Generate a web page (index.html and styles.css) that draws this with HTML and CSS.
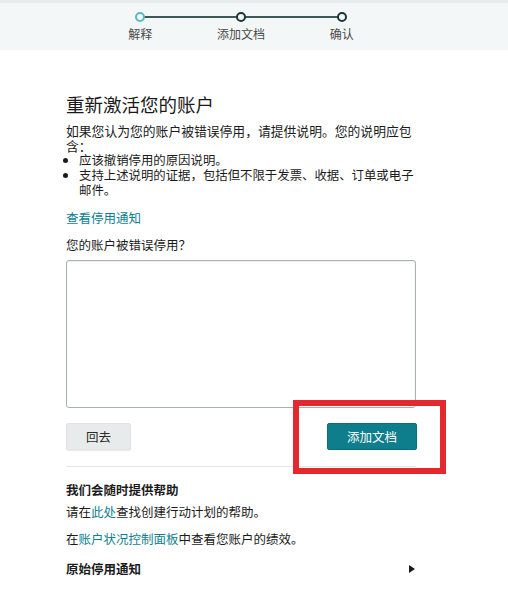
FILE: index.html
```html
<!DOCTYPE html>
<html lang="zh-CN">
<head>
<meta charset="utf-8">
<title>重新激活您的账户</title>
<link rel="stylesheet" href="styles.css">
</head>
<body>
<header class="topbar">
  <div class="stepper">
    <div class="step step-active"><span class="dot"></span><span class="step-label">解释</span></div>
    <div class="step"><span class="dot"></span><span class="step-label">添加文档</span></div>
    <div class="step"><span class="dot"></span><span class="step-label">确认</span></div>
  </div>
</header>
<main class="content">
  <h1 class="title">重新激活您的账户</h1>
  <p class="intro">如果您认为您的账户被错误停用，请提供说明。您的说明应包含：</p>
  <ul class="bullets">
    <li>应该撤销停用的原因说明。</li>
    <li>支持上述说明的证据，包括但不限于发票、收据、订单或电子邮件。</li>
  </ul>
  <a class="link notice-link" href="#">查看停用通知</a>
  <label class="field-label" for="why">您的账户被错误停用？</label>
  <textarea id="why" class="textarea"></textarea>
  <div class="actions">
    <button class="btn btn-secondary">回去</button>
    <button class="btn btn-primary">添加文档</button>
    <span class="highlight"></span>
  </div>
  <hr class="divider">
  <h2 class="help-title">我们会随时提供帮助</h2>
  <p class="help-line">请在<a class="link" href="#">此处</a>查找创建行动计划的帮助。</p>
  <p class="help-line second">在<a class="link" href="#">账户状况控制面板</a>中查看您账户的绩效。</p>
  <div class="original">
    <span class="original-title">原始停用通知</span>
    <span class="caret"></span>
  </div>
</main>
</body>
</html>
```

FILE: styles.css
```css
* { box-sizing: border-box; }
html, body { margin: 0; padding: 0; background: #ffffff; }
body {
  font-family: "Noto Sans CJK SC", "Noto Sans", "Liberation Sans", sans-serif;
  color: #1b1b1b;
  width: 508px;
  height: 603px;
  overflow: hidden;
}

.topbar {
  height: 50px;
  border-top: 3px solid #e8ebeb;
  background: #f4f7f7;
  padding-top: 9px;
}
.stepper {
  display: flex;
  margin-left: 90px;
  width: 302px;
}
.step {
  position: relative;
  width: 101px;
  display: flex;
  flex-direction: column;
  align-items: center;
}
.step + .step::before {
  content: "";
  position: absolute;
  top: 4px;
  right: 50%;
  width: 101px;
  height: 2px;
  background: #3e5858;
}
.dot {
  position: relative;
  z-index: 1;
  width: 10px;
  height: 10px;
  border-radius: 50%;
  border: 2px solid #1c3535;
  background: #f4f7f7;
}
.step-active .dot { border-color: #56b9c4; }
.step-label {
  margin-top: 4px;
  font-size: 12px;
  line-height: 16px;
  color: #4a4a4a;
}

.content {
  margin-left: 66px;
  width: 350px;
  padding-top: 42px;
}
.title {
  margin: 0;
  font-size: 18.5px;
  font-weight: 400;
  line-height: 24px;
  color: #1a1a1a;
}
.intro {
  margin: 8px 0 0;
  font-size: 12.8px;
  line-height: 14.5px;
}
.bullets {
  margin: 0;
  padding-left: 13px;
  width: 353px;
  font-size: 12.4px;
  line-height: 15px;
}
.bullets li { padding-left: 0; }
.link { color: #0f7f8f; text-decoration: none; }
.notice-link {
  display: block;
  margin-top: 12px;
  font-size: 12.5px;
  line-height: 16px;
}
.field-label {
  display: block;
  margin-top: 11px;
  font-size: 12.5px;
  line-height: 16px;
}
.textarea {
  display: block;
  margin-top: 7px;
  width: 350px;
  height: 148px;
  border: 1px solid #a9b0b0;
  border-radius: 3px;
  background: #fff;
  resize: none;
  box-shadow: inset 0 1px 2px rgba(0,0,0,0.08);
}
.actions {
  position: relative;
  margin-top: 15px;
  display: flex;
  justify-content: space-between;
}
.btn {
  height: 27px;
  border-radius: 2px;
  font-family: inherit;
  font-size: 12.5px;
  padding: 0;
}
.btn-secondary {
  width: 65px;
  background: #e8ebeb;
  border: 1px solid #dfe3e3;
  color: #2a2a2a;
  box-shadow: 0 1px 1px rgba(0,0,0,0.08);
}
.btn-primary {
  width: 90px;
  margin-right: -1px;
  background: #0e7d8c;
  border: 1px solid #0b6e7c;
  color: #ffffff;
}
.highlight {
  position: absolute;
  left: 227px;
  top: -23px;
  width: 153px;
  height: 74px;
  border: 6px solid #e5282e;
  pointer-events: none;
}
.divider {
  margin: 16px 0 0;
  border: 0;
  border-top: 1px solid #e3e6e6;
}
.help-title {
  margin: 14px 0 0;
  font-size: 12.5px;
  font-weight: 700;
  line-height: 18px;
}
.help-line {
  margin: 4px 0 0;
  font-size: 12.5px;
  line-height: 18px;
}
.help-line.second { margin-top: 9px; }
.original {
  margin-top: 12px;
  display: flex;
  justify-content: space-between;
  align-items: center;
  line-height: 18px;
}
.original-title {
  font-size: 12.5px;
  font-weight: 700;
}
.caret {
  width: 0;
  height: 0;
  margin-right: 1px;
  border-top: 4px solid transparent;
  border-bottom: 4px solid transparent;
  border-left: 6px solid #1a1a1a;
}
```
